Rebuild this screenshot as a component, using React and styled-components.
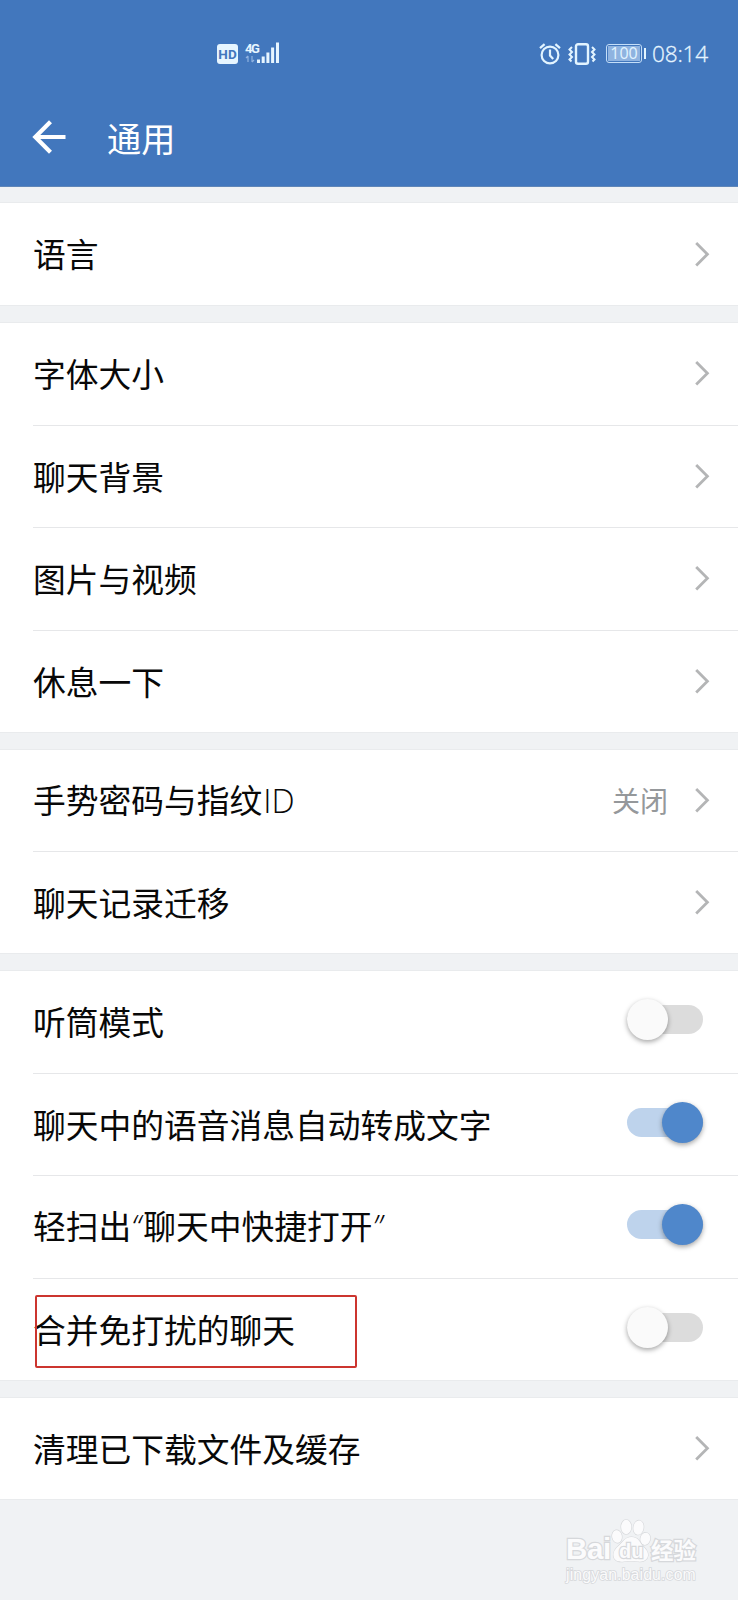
import styled, { createGlobalStyle } from "styled-components"

const Latin = styled.span`
    margin-left: 1px;
    font-family: 'Open Sans', sans-serif;
    font-weight: 300;
`;

const Quote = styled.span`
    display: inline-block;
    width: 12px;
    font-family: 'Open Sans', sans-serif;
    font-weight: 300;
    font-style: italic;
`;

const groups = [
    { height: 102, gap: 16, rows: [{ label: "语言" }] },
    {
        height: 409, gap: 18,
        rows: [{ label: "字体大小" }, { label: "聊天背景" }, { label: "图片与视频" }, { label: "休息一下" }]
    },
    {
        height: 203, gap: 18,
        rows: [{ label: <>手势密码与指纹<Latin>ID</Latin></>, value: "关闭" }, { label: "聊天记录迁移" }]
    },
    {
        height: 409, gap: 18,
        rows: [
            { label: "听筒模式", toggle: "off" },
            { label: "聊天中的语音消息自动转成文字", toggle: "on" },
            { label: <>轻扫出<Quote>“</Quote>聊天中快捷打开<Quote>”</Quote></>, toggle: "on" },
            { label: "合并免打扰的聊天", toggle: "off", marked: true }
        ]
    },
    { height: 101, gap: 18, rows: [{ label: "清理已下载文件及缓存" }] }
]

export default function App () {
    return (
        <Page>
            <GlobalStyle />
            <Header>
                <StatusBar>
                    <StatusLeft>
                        <HdBadge>HD</HdBadge>
                        <Signal />
                    </StatusLeft>
                    <StatusRight>
                        <AlarmIcon />
                        <VibrateIcon />
                        <Battery><BatteryLevel>100</BatteryLevel></Battery>
                        <Clock>08:14</Clock>
                    </StatusRight>
                </StatusBar>
                <TitleBar>
                    <BackIcon />
                    <Title>通用</Title>
                </TitleBar>
            </Header>
            <main>
                {groups.map((group, index) => (
                    <Group key={index} $height={group.height} $gap={group.gap}>
                        {group.rows.map((row, i) => <SettingRow key={i} {...row} />)}
                    </Group>
                ))}
            </main>
            <Footer>
                <Watermark />
            </Footer>
        </Page>
    )
}

function SettingRow ({ label, value, toggle, marked }) {
    return (
        <Row>
            <Label>{label}</Label>
            {value && <Value>{value}</Value>}
            {toggle ? <Track $on={toggle === "on"}><Knob $on={toggle === "on"} /></Track> : <Chevron />}
            {marked && <Mark />}
        </Row>
    )
}

function Chevron () {
    return (
        <svg width="16" height="27" viewBox="0 0 16 27" fill="none" stroke="#b4b5b6" strokeWidth="2.8">
            <path d="M2.2 2L13.4 13.2L2.2 24.4" />
        </svg>
    )
}

function BackIcon () {
    return (
        <svg width="34" height="34" viewBox="0 0 34 34" fill="none" stroke="#fff" strokeWidth="4.2">
            <path d="M33.5 17H3.5M18.5 1.8L3.3 17L18.5 32.2" />
        </svg>
    )
}

function Signal () {
    return (
        <SignalBox>
            <Network>4G</Network>
            <svg width="35" height="22" viewBox="0 0 35 22" fill="#e6f5ff">
                <path d="M12 17.5h3V21h-3zM16.7 14.5h3V21h-3zM21.4 10.5h3V21h-3zM26.1 5.5h3V21h-3zM31 .5h3V21h-3z" />
                <path d="M3 14v6M1 16l2-2M7 14v6M7 20l2-2" stroke="#8fb2e0" strokeWidth="1.2" fill="none" />
            </svg>
        </SignalBox>
    )
}

function AlarmIcon () {
    return (
        <svg width="22" height="22" viewBox="0 0 22 22" fill="none" stroke="#e2f4ff" strokeWidth="2.2">
            <circle cx="11" cy="12" r="8.4" />
            <path d="M11 6.5V12.5L14.2 16M1 5.2L5.6 1.2M21 5.2L16.4 1.2" />
        </svg>
    )
}

function VibrateIcon () {
    return (
        <svg width="28" height="22" viewBox="0 0 28 22" fill="none" stroke="#e2f4ff" strokeWidth="2.4">
            <rect x="8" y="1.3" width="12" height="19.4" rx="2" />
            <path d="M4 4L1.5 6.5L4 9L1.5 11.5L4 14L1.5 16.5L3.5 18.5M24 4L26.5 6.5L24 9L26.5 11.5L24 14L26.5 16.5L24.5 18.5" strokeWidth="2" />
        </svg>
    )
}

function Watermark () {
    return (
        <Brand>
            <BrandLine>
                <BrandName>Bai</BrandName>
                <Paw>
                    <svg width="40" height="44" viewBox="0 0 40 44" fill="#fbfbfc" stroke="#d6d8db" strokeWidth="1.2">
                        <ellipse cx="6" cy="17.5" rx="4.9" ry="6.4" transform="rotate(-10 6 17.5)" />
                        <ellipse cx="15.2" cy="8" rx="5.1" ry="7.2" />
                        <ellipse cx="27.5" cy="8.6" rx="5.1" ry="7.2" transform="rotate(8 27.5 8.6)" />
                        <ellipse cx="34.3" cy="19.8" rx="4.9" ry="6.2" transform="rotate(12 34.3 19.8)" />
                        <path d="M20.5 18C14 18 13 22 8.5 26C4 30 2 33 2.5 37C3.2 42 8 43.2 13 42.5C18 42 22 42 27 42.5C32 43.2 36.5 41 37 36.500C37.5 32 34 29.500 31 26C28 22 27 18 20.5 18Z" />
                    </svg>
                    <PawText>du</PawText>
                </Paw>
                <BrandCn>经验</BrandCn>
            </BrandLine>
            <Domain>jingyan.baidu.com</Domain>
        </Brand>
    )
}

const GlobalStyle = createGlobalStyle`
    * {
        box-sizing: border-box;
    }

    body {
        margin: 0;
        background-color: #f0f2f4;
        font-family: 'Noto Sans CJK SC', sans-serif;
    }

    svg {
        display: block;
        flex-shrink: 0;
    }
`;

const Page = styled.div`
    width: 738px;
    height: 1600px;
    display: flex;
    flex-direction: column;
    overflow: hidden;
`;

const Header = styled.header`
    height: 187px;
    background-color: #4277bd;
    border-bottom: 1px solid #5f86b8;
    color: #ffffff;
`;

const StatusBar = styled.div`
    height: 87px;
    padding: 20px 30px 0 217px;
    display: flex;
    align-items: center;
    justify-content: space-between;
`;

const StatusLeft = styled.div`
    display: flex;
    align-items: center;
    gap: 7px;
`;

const StatusRight = styled.div`
    display: flex;
    align-items: center;

    & > svg + svg {
        margin-left: 7px;
    }
`;

const HdBadge = styled.div`
    width: 21px;
    height: 20px;
    border-radius: 3px;
    background-color: #e6f5ff;
    color: #4277bd;
    font-family: 'Roboto', sans-serif;
    font-weight: 700;
    font-size: 13.5px;
    line-height: 21px;
    text-align: center;
`;

const SignalBox = styled.div`
    position: relative;
    margin-top: -2px;
`;

const Network = styled.span`
    position: absolute;
    left: 0;
    top: 1px;
    color: #e6f5ff;
    font-family: 'Roboto', sans-serif;
    font-weight: 700;
    font-size: 13px;
    line-height: 11px;
    letter-spacing: -1.5px;
`;

const Battery = styled.div`
    position: relative;
    width: 36px;
    height: 19px;
    margin: 0 10px 0 10px;
    padding: 1px;
    border: 1px solid #c4def8;
    border-radius: 3px;

    &::after {
        content: '';
        position: absolute;
        right: -5px;
        top: 3px;
        width: 2px;
        height: 11px;
        background-color: #e2f4ff;
    }
`;

const BatteryLevel = styled.div`
    height: 15px;
    background-color: #8fb3e0;
    color: #e2f4ff;
    font-family: 'Open Sans', sans-serif;
    font-size: 16px;
    line-height: 15px;
    text-align: center;
`;

const Clock = styled.span`
    width: 56px;
    color: #e6f5ff;
    font-family: 'Open Sans', sans-serif;
    font-weight: 300;
    font-size: 22.6px;
    line-height: 24px;
    letter-spacing: -0.2px;
    white-space: nowrap;
    -webkit-text-stroke: 0.3px #e6f5ff;
`;

const TitleBar = styled.div`
    height: 99px;
    display: flex;
    align-items: center;
    padding: 1px 0 0 32px;
    gap: 41px;
`;

const Title = styled.h1`
    margin: 0;
    font-weight: 400;
    font-size: 34.2px;
    line-height: 50px;
`;

const Group = styled.section`
    height: ${props => props.$height}px;
    margin-top: ${props => props.$gap}px;
    display: flex;
    flex-direction: column;
    background-color: #ffffff;
    box-shadow: 0 0 0 1px #e9ebed;
`;

const Row = styled.div`
    position: relative;
    flex: 1;
    margin-left: 33px;
    padding-right: 28px;
    display: flex;
    align-items: center;

    & + & {
        border-top: 1px solid #e6e7e9;
    }
`;

const Label = styled.span`
    flex: 1;
    margin-bottom: 1.5px;
    color: #080808;
    font-size: 32.75px;
    line-height: 48px;
    white-space: nowrap;
`;

const Value = styled.span`
    margin: 0 26px 2px 0;
    color: #95989b;
    font-size: 28px;
    line-height: 42px;
`;

const Track = styled.div`
    width: 76px;
    height: 29px;
    margin: 0 7px 4px 0;
    border-radius: 15px;
    display: flex;
    align-items: center;
    justify-content: ${props => props.$on ? "flex-end" : "flex-start"};
    background-color: ${props => props.$on ? "#bed3ec" : "#dcdcdc"};
`;

const Knob = styled.div`
    width: 41px;
    height: 41px;
    border-radius: 50%;
    background-color: ${props => props.$on ? "#4f87cb" : "#fafafa"};
    box-shadow: 0 2px 5px rgba(0, 0, 0, 0.35);
`;

const Mark = styled.div`
    position: absolute;
    left: 2px;
    top: 16px;
    width: 322px;
    height: 73px;
    border: 2px solid #cc352f;
    border-radius: 2px;
`;

const Footer = styled.footer`
    flex: 1;
    display: flex;
    justify-content: flex-end;
    padding: 20px 40px 0 0;
`;

const Brand = styled.div`
    width: 132px;
    color: #fbfbfc;
    -webkit-text-stroke: 2.4px #d6d8db;
    paint-order: stroke fill;
`;

const BrandLine = styled.div`
    height: 44px;
    display: flex;
    align-items: flex-end;
`;

const BrandName = styled.span`
    width: 45px;
    font-family: 'Liberation Sans', sans-serif;
    font-weight: 700;
    font-size: 29.5px;
    line-height: 29px;
    letter-spacing: -0.4px;
`;

const Paw = styled.div`
    position: relative;
    width: 40px;
`;

const PawText = styled.span`
    position: absolute;
    left: 8px;
    bottom: 3px;
    font-family: 'Liberation Sans', sans-serif;
    font-weight: 700;
    font-size: 20px;
    line-height: 18px;
`;

const BrandCn = styled.span`
    font-weight: 700;
    font-size: 22.5px;
    line-height: 28px;
`;

const Domain = styled.div`
    margin-top: 3px;
    font-family: 'Liberation Sans', sans-serif;
    font-size: 15.8px;
    line-height: 18px;
    letter-spacing: 0.15px;
    white-space: nowrap;
    -webkit-text-stroke-width: 1.6px;
`;
